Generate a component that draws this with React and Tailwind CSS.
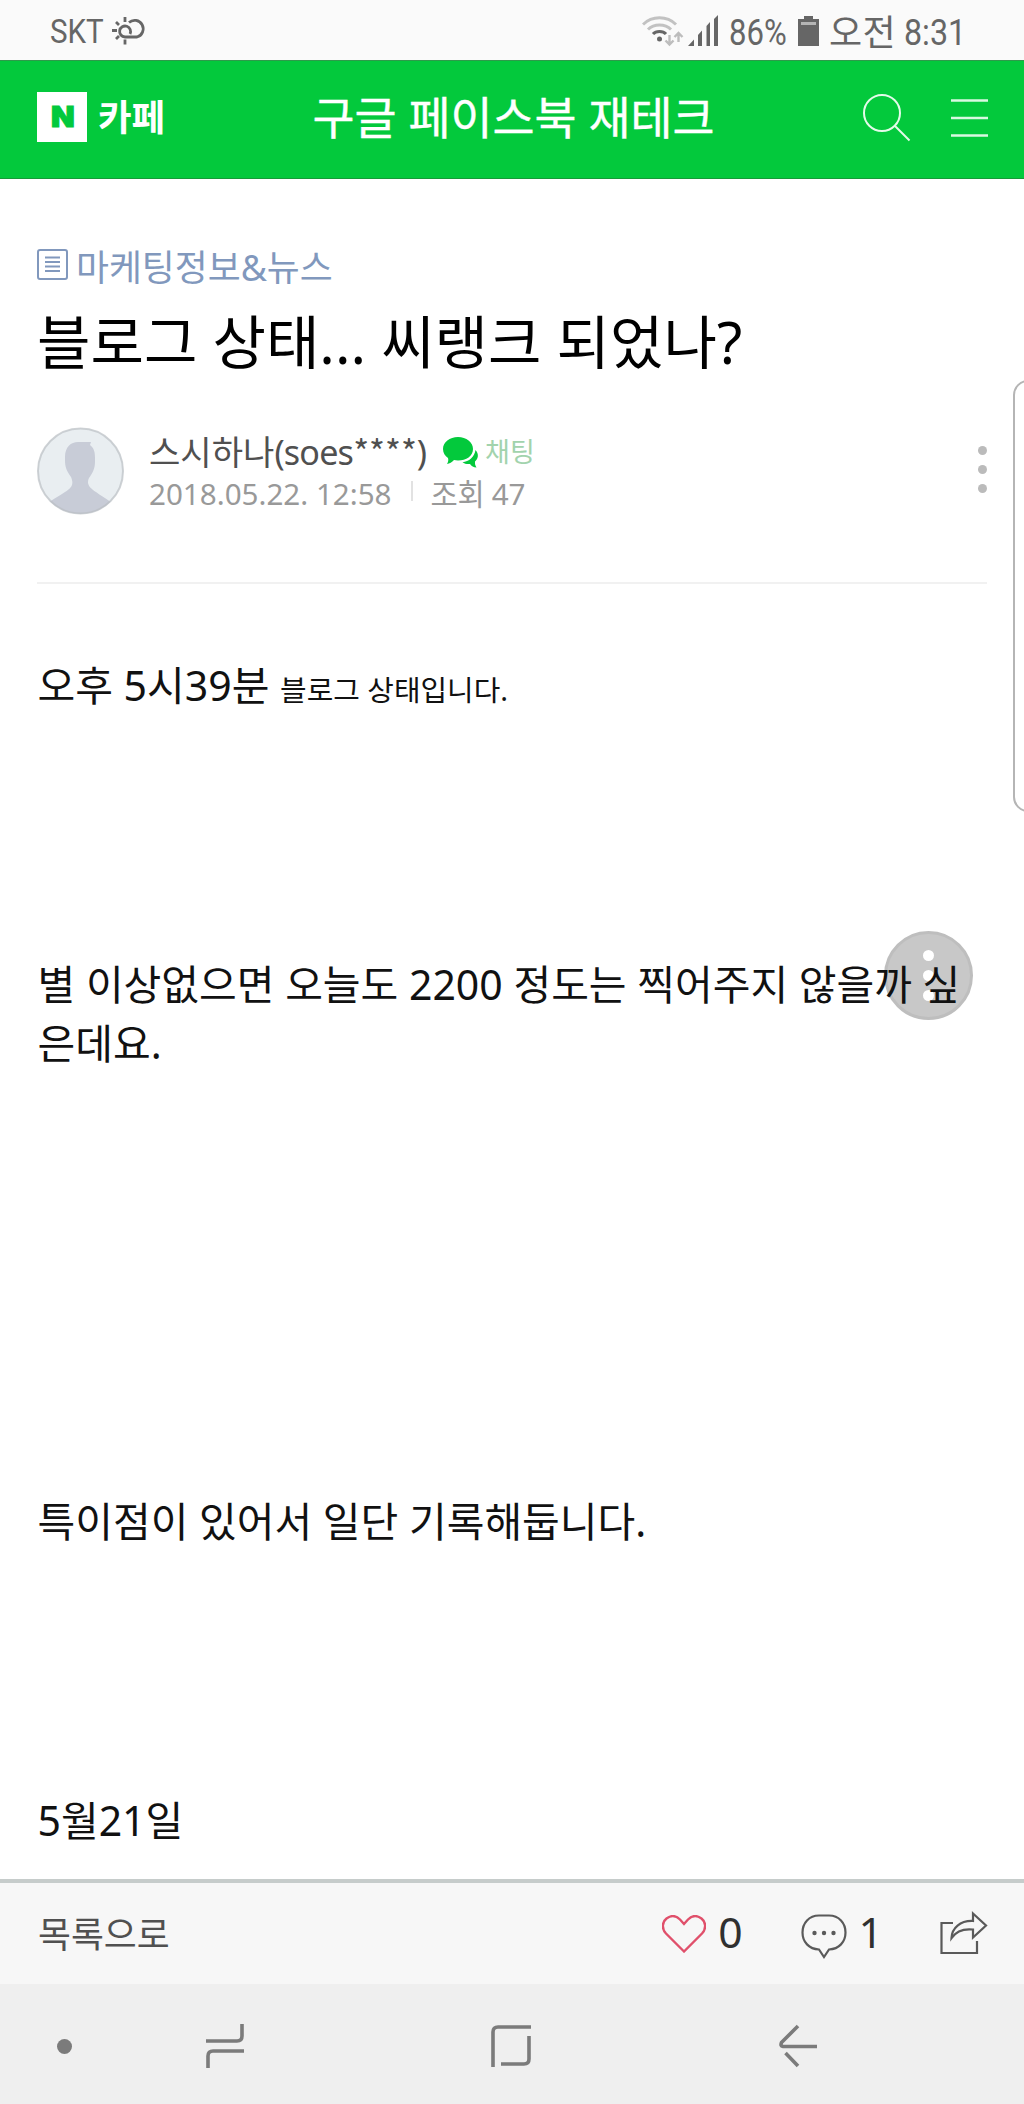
import React from "react";

const StatusBar = () => (
  <div className="flex h-[60px] items-center justify-between bg-[#fafafa] pl-[50px] pr-[62px] text-[#666666]">
    <div className="flex items-center pt-[2px]">
      <span className="w-[62px] origin-left scale-x-[0.87] whitespace-nowrap font-[Roboto] text-[34px] leading-[58px]">
        SKT
      </span>
      <svg width="36" height="28" viewBox="0 0 36 28" fill="none" stroke="#666666" strokeWidth="2.8">
        <path d="M18 17a5.500 5.500 0 1 0-5 3h12a8.500 8.500 0 1 0-8-14.500" />
        <path d="M13 0v5M13 22.500v5M0 13.500h5M4 5l3 3M4 22l3-3" />
      </svg>
    </div>

    <div className="flex items-center pt-[2px]">
      <svg width="77" height="32" viewBox="0 0 77 32" fill="none">
        <path d="M1 9.500C10 .500 25 .500 34 9.500" stroke="#c2c2c2" strokeWidth="3" />
        <path d="M6 14.500C12 8.500 23 8.500 29 14.500" stroke="#c2c2c2" strokeWidth="3" />
        <path d="M11 19C14 15.500 21 15.500 24 19" stroke="#666666" strokeWidth="3" />
        <circle cx="17.500" cy="24" r="2.500" fill="#666666" />
        <path d="M27.500 20v9M23.500 25.500l4 4 4-4M36.500 27v-9M32.500 22l4-4 4 4" stroke="#bdbdbd" strokeWidth="2.400" />
        <path d="M46 31l6-6.500V31zM56 20l4-4.500V31h-4zM64.500 11l3.500-4V31h-3.500zM72 4l4-4V31h-4z" fill="#666666" />
      </svg>
      <span className="ml-[10px] w-[59px] origin-left scale-x-[0.84] whitespace-nowrap pt-[4px] font-[Roboto] text-[37px] leading-[54px]">
        86%
      </span>
      <svg className="ml-[10px]" width="21" height="30" viewBox="0 0 21 30">
        <path d="M6 0h9v3h6v27H0V3h6z" fill="#666666" />
        <path d="M3 6h15v3H3z" fill="#b5b5b5" />
      </svg>
      <span className="ml-[10px] w-[68px] whitespace-nowrap pt-[4px] text-[36px] leading-[54px] tracking-[0.5px]">
        오전
      </span>
      <span className="ml-[7px] w-[58px] origin-left scale-x-[0.87] whitespace-nowrap pt-[4px] font-[Roboto] text-[37px] leading-[54px]">
        8:31
      </span>
    </div>
  </div>
);

const Header = () => (
  <header className="flex h-[119px] items-center justify-between border-y border-t-[#2e9a4b] border-b-[#159a38] bg-[#03c93c] pb-[5px] pl-[37px] pr-[35px] text-white">
    <div className="flex w-[274px] items-center">
      <span className="flex h-[50px] w-[50px] items-center justify-center bg-white text-[#03c93c]">
        <span className="scale-x-[1.1] pl-px font-[Inter] text-[28px] font-black leading-none [-webkit-text-stroke:1px_#03c93c]">
          N
        </span>
      </span>
      <span className="ml-[11px] text-[36.500px] font-bold leading-[50px]">카페</span>
    </div>
    <h1 className="whitespace-nowrap pl-px text-[45.700px] leading-[110px] [-webkit-text-stroke:0.4px_white]">
      구글 페이스북 재테크
    </h1>
    <div className="flex w-[274px] items-center justify-end pt-[2px]">
      <svg width="48" height="48" viewBox="0 0 48 48" fill="none" stroke="#e4fbea" strokeWidth="2">
        <circle cx="19" cy="19" r="18" />
        <path d="M31.500 31.500L46.500 46.500" />
      </svg>
      <svg className="ml-[40px]" width="38" height="40" viewBox="0 0 38 40" stroke="#d9f9e1" strokeWidth="2.400">
        <path d="M0 2.500h37M0 20h37M0 37.500h37" />
      </svg>
    </div>
  </header>
);

const ArticleInfo = () => (
  <div className="mx-[37px] h-[405px] border-b-2 border-[#f1f1f1] pt-[69px]">
    <div className="flex h-[36px] items-center text-[#8198bd]">
      <svg className="mb-[2px]" width="31" height="31" viewBox="0 0 31 31" fill="none" stroke="#8198bd" strokeWidth="2">
        <rect x="1" y="1" width="29" height="29" rx="2" />
        <path d="M8 8.500h15M8 13h15M8 17.500h15M8 22h15" />
      </svg>
      <span className="ml-2 pt-[2px] text-[35.800px] leading-[36px]">마케팅정보&amp;뉴스</span>
    </div>

    <h2 className="mt-[22px] whitespace-nowrap text-[58.100px] leading-[72px] text-black">
      블로그 상태... 씨랭크 되었나?
    </h2>

    <div className="mt-[49px] flex h-[88px] items-center">
      <svg width="87" height="88" viewBox="0 0 87 88">
        <defs>
          <clipPath id="avatar">
            <circle cx="43.500" cy="44" r="43" />
          </clipPath>
        </defs>
        <circle cx="43.500" cy="44" r="43" fill="#e9eef1" />
        <path
          clipPath="url(#avatar)"
          d="M0 88C8 76 14 74 28 65C35 61 37 57 34 50C29 43 28 39 28 33V30C28 20 34 15 41 15H54L53 18C57 21 58 25 58 31V35C58 42 55 47 52 51C49 57 53 61 59 65C70 73 78 76 87 88Z"
          fill="#c8ccd7"
        />
        <circle cx="43.500" cy="44" r="42.500" fill="none" stroke="#b9bdc2" strokeOpacity=".65" strokeWidth="2" />
      </svg>
      <div className="ml-[25px] flex-1 pt-[4px]">
        <div className="flex h-[41px] items-center">
          <span className="text-[34.100px] leading-[42px] text-[#505050]">
            스시하나<span className="tracking-[-0.8px]">(soes</span>
            <span className="font-['Noto_Sans_CJK_KR'] leading-none">****</span>)
          </span>
          <svg className="ml-[16px]" width="36" height="31" viewBox="0 0 36 31" fill="#03c93c">
            <path d="M15 0c8.300 0 15 5 15 12s-6.700 11.500-15 11.500c-1.500 0-3-.1-4-.4C9 25.500 6.500 26.800 4 27c1.300-2 1.600-4 1-6C2 19 0 16 0 12 0 5 6.700 0 15 0z" />
            <path d="M32.500 13c3.500 4 3 8.500-.5 11.500-.2 2.500.3 4 1.500 6-3 0-5-1.500-6.500-3.500-3 .3-5.500-.3-7.500-1.800C26 24.500 31.500 20 32.500 13z" />
          </svg>
          <span className="ml-[6px] text-[27px] leading-[42px] text-[#a2d3ad]">채팅</span>
        </div>
        <div className="flex h-[41px] items-center text-[29.600px] leading-[41px] text-[#999999]">
          <span>2018.05.22. 12:58</span>
          <span className="ml-[19px] mb-[4px] h-[20px] w-[2px] bg-[#e2e2e2]" />
          <span className="ml-[18px] tracking-[-0.3px]">조회 47</span>
        </div>
      </div>
      <div className="mb-[2px] flex flex-col gap-[10px]">
        <span className="h-[9px] w-[9px] rounded-full bg-[#bbbbbb]" />
        <span className="h-[9px] w-[9px] rounded-full bg-[#bbbbbb]" />
        <span className="h-[9px] w-[9px] rounded-full bg-[#bbbbbb]" />
      </div>
    </div>
  </div>
);

const ArticleBody = () => (
  <div className="relative z-10 ml-[37.500px] mt-[72px] w-[960px] text-[41px] leading-[59.730px] text-[#111111]">
    <p>
      오후 5시39분 <span className="text-[28.900px] leading-none">블로그 상태입니다.</span>
    </p>
    <p className="mt-[238.900px]">
      별 이상없으면 오늘도 2200 정도는 찍어주지 않을까 싶
      <br />
      은데요.
    </p>
    <p className="mt-[418.100px]">특이점이 있어서 일단 기록해둡니다.</p>
    <p className="mt-[238.900px]">5월21일</p>
  </div>
);

const BottomBar = () => (
  <div className="flex h-[105px] items-center border-t-4 border-[#c6cccb] bg-[#f7f7f7] pl-[38px] pr-[36px]">
    <span className="flex-1 text-[35.800px] leading-[100px] text-[#505050]">목록으로</span>
    <svg width="44" height="38" viewBox="0 0 44 38" fill="none" stroke="#e0506b" strokeWidth="2.400">
      <path d="M22 36.500L4 18.500C-.5 13.500 0 7 4.500 3.500C9 .200 14 .500 18 4.500L22 9L26 4.500C30 .500 35 .200 39.500 3.500C44 7 44.500 13.500 40 18.500Z" />
    </svg>
    <span className="ml-[12px] pb-[4px] text-[42.700px] leading-[96px] text-[#303030]">0</span>
    <svg className="ml-[58px] mt-[6px]" width="46" height="46" viewBox="0 0 46 46" fill="none" stroke="#5a5a5a" strokeWidth="2.200">
      <path d="M18 1.500h10c10 0 16.500 7.500 16.500 17S38 35 28 35.500L23 43l-5-7.500C8 35 1.500 28 1.500 18.500S8 1.500 18 1.500z" />
      <g fill="#5a5a5a" stroke="none">
        <circle cx="13.500" cy="19" r="2.200" />
        <circle cx="23" cy="19" r="2.200" />
        <circle cx="32.500" cy="19" r="2.200" />
      </g>
    </svg>
    <span className="ml-[12px] mr-px pb-[4px] text-[42.700px] leading-[96px] text-[#303030]">1</span>
    <svg className="ml-[56px] mb-[2px]" width="48" height="44" viewBox="0 0 48 44" fill="none" stroke="#5a5a5a" strokeWidth="2.200">
      <path d="M13 12H1.500v30H37V30" />
      <path d="M33 2.500L46 14.500L33 26.500V18.500C24 17.500 16 20.500 11.500 27C12 17 20 9.500 33 10z" />
    </svg>
  </div>
);

const SystemNav = () => (
  <nav className="flex h-[120px] items-center bg-[#efefef] pl-[57px]">
    <span className="mt-[4px] h-[15px] w-[15px] rounded-full bg-[#7b7b7b]" />
    <svg className="ml-[134px] mt-[4px]" width="39" height="44" viewBox="0 0 39 44" fill="none" stroke="#7b7b7b" strokeWidth="3.600">
      <path d="M0 17h31q5 0 5-5V0M38 27H7q-5 0-5 5v12" />
    </svg>
    <svg className="ml-[246px] mt-[4px]" width="42" height="42" viewBox="0 0 42 42" fill="none" stroke="#7b7b7b" strokeWidth="3.600">
      <path d="M2 42V7q0-5 5-5h33M38 11v23q0 5-5 5H10" />
    </svg>
    <svg className="ml-[246px] mt-[4px]" width="39" height="44" viewBox="0 0 39 44" fill="none" stroke="#7b7b7b" strokeWidth="3.600">
      <path d="M19 2L2.500 18.500Q1 22 4 22.500H38M6.500 29L19 42" />
    </svg>
  </nav>
);

const App = () => {
  return (
    <div className="relative flex h-[2104px] w-[1024px] flex-col overflow-hidden bg-white font-['Noto_Sans','Noto_Sans_CJK_KR',sans-serif]">
      <StatusBar />
      <Header />
      <main className="h-[1701px] overflow-hidden">
        <ArticleInfo />
        <ArticleBody />
      </main>
      <BottomBar />
      <SystemNav />

      {/* Edge panel handle */}
      <div className="absolute left-[1013px] top-[380px] h-[432px] w-[30px] rounded-[16px] border-2 border-[#b5b5b5] bg-white" />

      {/* Floating menu button, sits under the article text */}
      <div className="absolute left-[884px] top-[931px] flex h-[89px] w-[89px] flex-col items-center justify-center gap-[9px] rounded-full border-[3px] border-[#bebebe] bg-[#c8c8c8]">
        <span className="h-[11px] w-[11px] rounded-full bg-white" />
        <span className="h-[11px] w-[11px] rounded-full bg-white" />
        <span className="h-[11px] w-[11px] rounded-full bg-white" />
      </div>
    </div>
  );
};

export default App;
